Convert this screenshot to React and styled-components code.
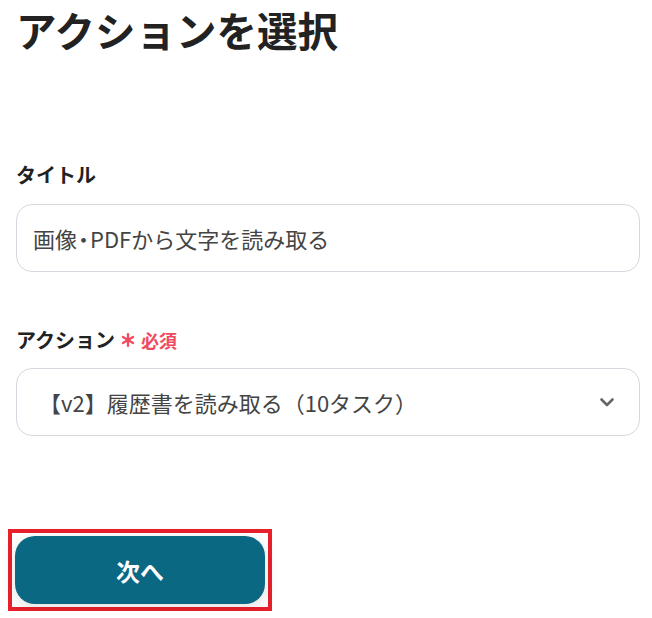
import React from 'react';
import styled, { createGlobalStyle } from 'styled-components';

const GlobalStyle = createGlobalStyle`
  html, body {
    margin: 0;
    padding: 0;
    background: #fff;
  }
  body {
    font-family: "Noto Sans CJK JP", "Noto Sans", sans-serif;
    color: #222;
  }
`;

const Page = styled.div`
  width: 652px;
  padding: 6px 12px 0 16px;
  box-sizing: border-box;
`;

const Title = styled.h1`
  margin: 0;
  font-size: 40.5px;
  line-height: 48px;
  font-weight: 700;
  color: #222;
`;

const Field = styled.div`
  display: flex;
  flex-direction: column;
  gap: ${(p) => p.$gap || 16}px;
  margin-top: ${(p) => p.$top}px;
`;

const Label = styled.div`
  display: flex;
  align-items: center;
  font-size: 20px;
  line-height: 26px;
  font-weight: 700;
  color: #222;
`;

const Required = styled.span`
  display: inline-flex;
  align-items: center;
  gap: 6px;
  margin-left: 6px;
  color: #ef4b5f;
  font-size: 18px;
  font-weight: 700;
`;

const Box = styled.div`
  display: flex;
  align-items: center;
  justify-content: space-between;
  height: 68px;
  box-sizing: border-box;
  border: 1px solid #d5d9df;
  border-radius: 16px;
  padding: 0 ${(p) => (p.$select ? 24 : 16)}px 0 ${(p) => (p.$select ? 22 : 16)}px;
  font-size: 22px;
  color: #444;
`;

const Dot = styled.span`
  font-feature-settings: "palt";
  margin: 0 1px;
`;

const Chevron = styled.svg`
  width: 16px;
  height: 16px;
  flex: none;
`;

const Highlight = styled.div`
  display: inline-flex;
  margin: 93px 0 0 -8px;
  padding: 3px;
  border: 4px solid #e8202b;
`;

const NextButton = styled.button`
  width: 250px;
  height: 68px;
  border: none;
  border-radius: 20px;
  background: #0b6882;
  color: #fff;
  font-family: inherit;
  font-size: 24px;
  font-weight: 700;
  box-shadow: 0 4px 16px rgba(0, 0, 0, 0.12);
  cursor: pointer;
`;

const App = () => (
  <>
    <GlobalStyle />
    <Page>
      <Title>アクションを選択</Title>
      <Field $top={108}>
        <Label>タイトル</Label>
        <Box>
          <span>
            画像<Dot>・</Dot>PDFから文字を読み取る
          </span>
        </Box>
      </Field>
      <Field $top={55} $gap={15}>
        <Label>
          アクション
          <Required>
            <svg width="14" height="14" viewBox="0 0 12 12">
              <g stroke="#ef4b5f" strokeWidth="2" strokeLinecap="round">
                <line x1="6" y1="1" x2="6" y2="11" />
                <line x1="1.7" y1="3.5" x2="10.3" y2="8.5" />
                <line x1="1.7" y1="8.5" x2="10.3" y2="3.5" />
              </g>
            </svg>
            必須
          </Required>
        </Label>
        <Box $select>
          <span>【v2】履歴書を読み取る（10タスク）</span>
          <Chevron viewBox="0 0 16 16">
            <path d="M2.5 5.5 L8 11 L13.5 5.5" fill="none" stroke="#666" strokeWidth="2.6" strokeLinecap="round" strokeLinejoin="round" />
          </Chevron>
        </Box>
      </Field>
      <Highlight>
        <NextButton>次へ</NextButton>
      </Highlight>
    </Page>
  </>
);

export default App;
